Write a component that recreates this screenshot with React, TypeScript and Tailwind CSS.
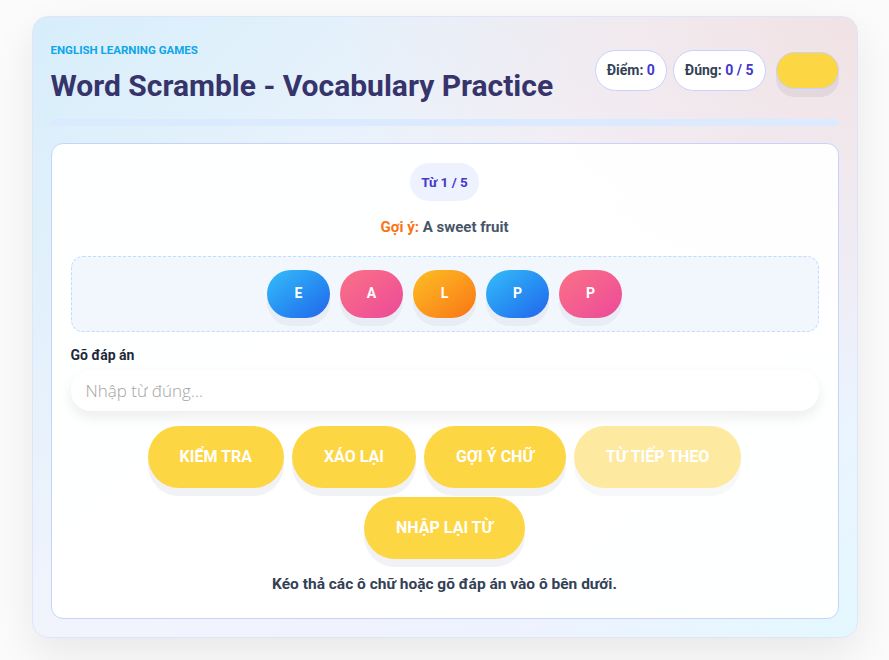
import { useState } from "react";

const tiles = [
  { ch: "E", cls: "bg-gradient-to-br from-[#38bdf8] to-[#2563eb]" },
  { ch: "A", cls: "bg-gradient-to-br from-[#fb7185] to-[#ec4899]" },
  { ch: "L", cls: "bg-gradient-to-br from-[#fbbf24] to-[#f97316]" },
  { ch: "P", cls: "bg-gradient-to-br from-[#38bdf8] to-[#2563eb]" },
  { ch: "P", cls: "bg-gradient-to-br from-[#fb7185] to-[#ec4899]" },
];

function GameButton({ label, faded = false }: { label: string; faded?: boolean }) {
  return (
    <button
      className={`h-[62px] px-[32px] rounded-full bg-[#fdd643] text-white text-[16px] font-bold uppercase shadow-[0_8px_0_#f1f2f5] ${
        faded ? "opacity-50" : ""
      }`}
    >
      {label}
    </button>
  );
}

export default function App() {
  const [answer, setAnswer] = useState("");

  return (
    <div className="min-h-[660px] bg-[#fbfbfc] pt-4 font-['Roboto',sans-serif]">
      <div className="mx-auto w-[826px] rounded-[16px] border border-[#e0e4fb] bg-[radial-gradient(ellipse_at_100%_0%,#f1e2e4_0%,rgba(241,226,228,0)_45%),linear-gradient(135deg,#d6eefa_0%,#f2f4fd_45%,#eef2fe_75%,#e4f8fe_100%)] p-[18px] shadow-[0_16px_40px_rgba(0,0,0,0.08)]">
        {/* header */}
        <div className="flex items-start justify-between">
          <div className="pt-[7px]">
            <div className="text-[11.5px] font-bold text-[#0ea5e9]">ENGLISH LEARNING GAMES</div>
            <h1 className="mt-[9px] text-[30px] font-bold leading-[36px] text-[#36346a]">
              Word Scramble - Vocabulary Practice
            </h1>
          </div>
          <div className="flex items-center gap-[6px] pt-[15px]">
            <div className="h-[41px] px-[11px] rounded-full border border-[#c7d2fe] bg-white flex items-center text-[14px] font-bold text-[#334155]">
              Điểm:&nbsp;<span className="text-[#4338ca]">0</span>
            </div>
            <div className="h-[41px] px-[11px] rounded-full border border-[#c7d2fe] bg-white flex items-center text-[14px] font-bold text-[#334155]">
              Đúng:&nbsp;<span className="text-[#4338ca]">0 / 5</span>
            </div>
            <button className="ml-[4px] h-[37px] w-[63px] rounded-full border border-[#c7d2fe] bg-[#fdd643] shadow-[0_8px_0_rgba(200,190,200,0.35)]" />
          </div>
        </div>
        <div className="mt-[15px] h-[7px] rounded-full bg-[#dbeafe]" />

        {/* game card */}
        <div className="mt-[17px] rounded-[12px] border border-[#c7d2fe] bg-white/95 px-[19px] pt-[19px] pb-[22px] flex flex-col items-center">
          <div className="h-[38px] px-[11px] rounded-full bg-[#eef2ff] flex items-center text-[13.5px] font-bold text-[#4338ca]">
            Từ 1 / 5
          </div>
          <div className="mt-[15px] text-[15px] font-bold text-[#475569]">
            <span className="text-[#f97316]">Gợi ý:</span> A sweet fruit
          </div>

          <div className="mt-[17px] w-full h-[76px] rounded-[12px] border border-dashed border-[#bfdbfe] bg-[#f2f7fe] flex items-start justify-center gap-[10px] pt-[13px]">
            {tiles.map((t, i) => (
              <div
                key={i}
                className={`w-[63px] h-[48px] rounded-full ${t.cls} flex items-center justify-center text-white text-[14px] font-bold shadow-[0_8px_0_#e8ecf4]`}
              >
                {t.ch}
              </div>
            ))}
          </div>

          <label className="self-start mt-[13px] text-[14px] font-bold text-[#1e293b]">Gõ đáp án</label>
          <input
            value={answer}
            onChange={(e) => setAnswer(e.target.value)}
            placeholder="Nhập từ đúng..."
            className="mt-[4px] w-full h-[41px] rounded-[20px] bg-white px-[15px] text-[17px] text-[#334155] placeholder:text-[#a3a3a3] font-['Open_Sans',sans-serif] font-light shadow-[0_6px_14px_rgba(15,23,42,0.08)] outline-none"
          />

          <div className="mt-[15px] flex flex-wrap justify-center gap-x-[8px] gap-y-[9px] w-[640px]">
            <GameButton label="Kiểm tra" />
            <GameButton label="Xáo lại" />
            <GameButton label="Gợi ý chữ" />
            <GameButton label="Từ tiếp theo" faded />
            <GameButton label="Nhập lại từ" />
          </div>

          <div className="mt-[14px] text-[15.5px] font-bold text-[#334155]">
            Kéo thả các ô chữ hoặc gõ đáp án vào ô bên dưới.
          </div>
        </div>
      </div>
    </div>
  );
}
